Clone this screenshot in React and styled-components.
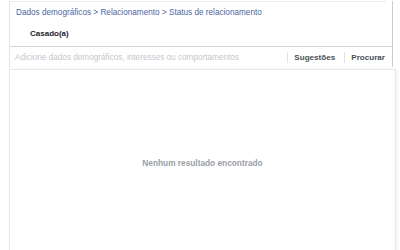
import React from "react";
import styled, { createGlobalStyle } from "styled-components";

const Global = createGlobalStyle`
  html, body { margin: 0; padding: 0; background: #fff; }
  body { font-family: "Liberation Sans", Arial, sans-serif; -webkit-font-smoothing: antialiased; }
`;

const Page = styled.div`
  width: 400px;
  height: 250px;
  overflow: hidden;
  padding-left: 9px;
  box-sizing: border-box;
`;

const Selector = styled.div`
  width: 384px;
  box-sizing: border-box;
  border-left: 1px solid #e3e4e8;
  border-right: 1px solid #c8ccd9;
`;

const Selected = styled.div`
  margin-top: 1px;
  margin-right: 6px;
  border-top: 1px solid #e9eaed;
  height: 45px;
  box-sizing: border-box;
  padding: 6px 0 0 6px;
`;

const Crumbs = styled.div`
  font-size: 8.2px;
  line-height: 9px;
  color: #4a66a0;
`;

const Value = styled.div`
  margin-top: 12px;
  padding-left: 14px;
  font-size: 8px;
  line-height: 9px;
  font-weight: bold;
  color: #1d2129;
`;

const InputRow = styled.div`
  height: 21px;
  border-top: 1px solid #d3d6e0;
  display: flex;
  align-items: center;
  padding: 0 7px 0 5px;
  box-sizing: border-box;
`;

const Placeholder = styled.div`
  flex: 1;
  font-size: 8.2px;
  color: #c4c7cd;
`;

const Action = styled.div`
  font-size: 8.1px;
  font-weight: bold;
  color: #4b4f56;
  border-left: 1px solid #dfe1e5;
  padding-left: 6px;
  margin-left: ${(p) => p.$gap}px;
  line-height: 11px;
`;

const Results = styled.div`
  margin-top: 2px;
  width: 387px;
  height: 200px;
  box-sizing: border-box;
  border: 1px solid #e6e7ea;
  border-bottom: none;
  box-shadow: 1px 0 2px rgba(0, 0, 0, 0.06);
  display: flex;
  justify-content: center;
  padding-top: 88px;
`;

const Empty = styled.div`
  font-size: 8.3px;
  font-weight: bold;
  color: #9a9ea6;
`;

export default function App() {
  return (
    <Page>
      <Global />
      <Selector>
        <Selected>
          <Crumbs>Dados demográficos &gt; Relacionamento &gt; Status de relacionamento</Crumbs>
          <Value>Casado(a)</Value>
        </Selected>
        <InputRow>
          <Placeholder>Adicione dados demográficos, interesses ou comportamentos</Placeholder>
          <Action $gap={0}>Sugestões</Action>
          <Action $gap={9}>Procurar</Action>
        </InputRow>
      </Selector>
      <Results>
        <Empty>Nenhum resultado encontrado</Empty>
      </Results>
    </Page>
  );
}
